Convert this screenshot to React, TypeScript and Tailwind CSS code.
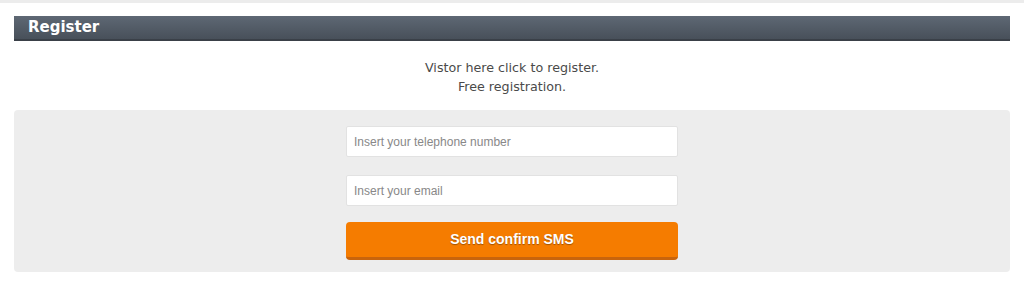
import React, { useState } from 'react';

export default function App() {
  const [phone, setPhone] = useState('');
  const [email, setEmail] = useState('');

  return (
    <div className="w-[1024px] h-[282px] bg-white overflow-hidden">
      {/* top strip */}
      <div className="h-[3px] bg-[#ececec]" />

      <div className="px-[14px] pt-[13px]">
        {/* Section title */}
        <div className="h-[25px] bg-gradient-to-b from-[#5e6874] to-[#48505a] border-b-2 border-[#3a4048] flex items-center pl-[14px]">
          <h2 className="text-white font-bold text-[15px] leading-none font-['DejaVu_Sans',sans-serif]">
            Register
          </h2>
        </div>

        {/* Intro */}
        <div className="text-center text-[#4a4a4a] text-[12.7px] leading-[19px] font-['DejaVu_Sans',sans-serif] pt-[17px] pb-[14px]">
          <p>Vistor here click to register.</p>
          <p>Free registration.</p>
        </div>

        {/* Form panel */}
        <div className="bg-[#ededed] rounded-[4px] h-[162px] pt-[16px] flex flex-col items-center">
          <input
            value={phone}
            onChange={(e) => setPhone(e.target.value)}
            placeholder="Insert your telephone number"
            className="w-[332px] h-[31px] bg-white border border-[#e2e2e2] rounded-[2px] px-[7px] text-[12px] text-[#444] placeholder:text-[#888] font-['Liberation_Sans',Arial,sans-serif] outline-none"
          />
          <input
            value={email}
            onChange={(e) => setEmail(e.target.value)}
            placeholder="Insert your email"
            className="mt-[18px] w-[332px] h-[31px] bg-white border border-[#e2e2e2] rounded-[2px] px-[7px] text-[12px] text-[#444] placeholder:text-[#888] font-['Liberation_Sans',Arial,sans-serif] outline-none"
          />
          <button
            type="button"
            className="mt-[16px] w-[332px] h-[38px] bg-[#f57c00] border-b-[3px] border-[#c8640c] rounded-[4px] text-white font-bold text-[14px] font-['Liberation_Sans',Arial,sans-serif] [text-shadow:0_1px_1px_rgba(0,0,0,0.35)]"
          >
            Send confirm SMS
          </button>
        </div>
      </div>
    </div>
  );
}
